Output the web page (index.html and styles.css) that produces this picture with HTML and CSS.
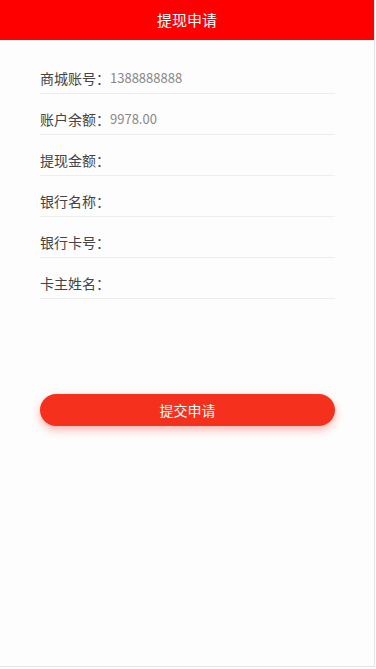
FILE: index.html
```html
<!DOCTYPE html>
<html lang="zh">
<head>
<meta charset="utf-8">
<title>提现申请</title>
<link rel="stylesheet" href="styles.css">
</head>
<body>
<div class="page">
  <header class="topbar">提现申请</header>
  <div class="form">
    <div class="row"><span class="label">商城账号：</span><span class="value">1388888888</span></div>
    <div class="row"><span class="label">账户余额：</span><span class="value">9978.00</span></div>
    <div class="row"><span class="label">提现金额：</span></div>
    <div class="row"><span class="label">银行名称：</span></div>
    <div class="row"><span class="label">银行卡号：</span></div>
    <div class="row"><span class="label">卡主姓名：</span></div>
  </div>
  <div class="actions"><button class="submit">提交申请</button></div>
</div>
</body>
</html>
```
FILE: styles.css
```css
html, body {
  margin: 0;
  padding: 0;
  background: #fff;
  font-family: "Microsoft YaHei", "Noto Sans CJK SC", "Noto Sans", sans-serif;
}
.page {
  width: 375px;
  height: 667px;
  box-sizing: border-box;
  border-right: 1px solid #e4e4e4;
  border-bottom: 1px solid #e4e4e4;
  background: #fdfdfd;
}
.topbar {
  height: 40px;
  line-height: 40px;
  background: #ff0000;
  color: #fff;
  text-align: center;
  font-size: 15px;
}
.form {
  padding: 13px 39px 0 40px;
}
.row {
  display: flex;
  align-items: center;
  padding: 15px 0 5px;
  line-height: 20px;
  border-bottom: 1px solid #eeeeee;
  font-size: 14px;
}
.label {
  color: #444;
}
.value {
  color: #888;
  font-size: 13px;
}
.actions {
  padding: 95px 40px 0 40px;
}
.submit {
  display: block;
  width: 295px;
  height: 32px;
  border: none;
  border-radius: 16px;
  background: #f5311e;
  color: #fff;
  font-family: inherit;
  font-size: 14px;
  box-shadow: 0 4px 8px rgba(245, 49, 30, 0.35);
}
```
